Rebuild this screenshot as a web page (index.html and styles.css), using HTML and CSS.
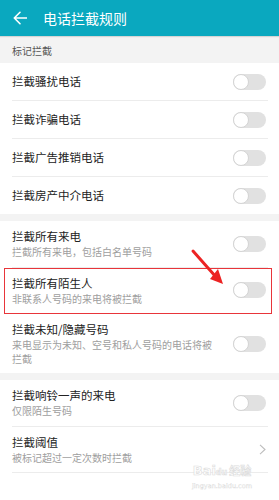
FILE: index.html
```html
<!DOCTYPE html>
<html lang="zh-CN">
<head>
<meta charset="utf-8">
<title>电话拦截规则</title>
<link rel="stylesheet" href="styles.css">
</head>
<body>
<div class="screen">
  <header class="appbar">
    <svg class="back" width="14" height="14" viewBox="0 0 14 14"><path d="M13.5 7H1.5M7 1.3L1.3 7L7 12.7" fill="none" stroke="#fff" stroke-width="1.6" stroke-linecap="round" stroke-linejoin="round"/></svg>
    <span class="title">电话拦截规则</span>
  </header>

  <div class="section-label">标记拦截</div>
  <div class="group">
    <div class="row"><div class="text"><div class="t">拦截骚扰电话</div></div><span class="toggle"></span></div>
    <div class="row"><div class="text"><div class="t">拦截诈骗电话</div></div><span class="toggle"></span></div>
    <div class="row"><div class="text"><div class="t">拦截广告推销电话</div></div><span class="toggle"></span></div>
    <div class="row last"><div class="text"><div class="t">拦截房产中介电话</div></div><span class="toggle"></span></div>
  </div>

  <div class="gap"></div>
  <div class="group">
    <div class="row two"><div class="text"><div class="t">拦截所有来电</div><div class="s">拦截所有来电，包括白名单号码</div></div><span class="toggle"></span></div>
    <div class="row two highlight"><div class="text"><div class="t">拦截所有陌生人</div><div class="s">非联系人号码的来电将被拦截</div></div><span class="toggle"></span><span class="mark"></span></div>
    <div class="row two last"><div class="text"><div class="t">拦截未知/隐藏号码</div><div class="s">来电显示为未知、空号和私人号码的电话将被拦截</div></div><span class="toggle"></span></div>
  </div>

  <div class="gap"></div>
  <div class="group">
    <div class="row two"><div class="text"><div class="t">拦截响铃一声的来电</div><div class="s">仅限陌生号码</div></div><span class="toggle"></span></div>
    <div class="row two"><div class="text"><div class="t">拦截阈值</div><div class="s">被标记超过一定次数时拦截</div></div>
      <svg class="chev" width="7" height="11" viewBox="0 0 7 11"><path d="M1 0.8L6 5.5L1 10.2" fill="none" stroke="#bdbdbd" stroke-width="1.1"/></svg>
    </div>
  </div>

  <svg class="arrow" width="40" height="42" viewBox="0 0 40 42"><path d="M3 3L26 29" stroke="#ec2323" stroke-width="3" stroke-linecap="round"/><path d="M33 36L20 31L28 21Z" fill="#ec2323"/></svg>

  <div class="watermark"><div class="wm1"><span>Bai</span><span class="du">du</span><span class="jy">经验</span></div><div class="wm2">jingyan.baidu.com</div></div>
</div>
</body>
</html>
```

FILE: styles.css
```css
html, body {
  margin: 0;
  padding: 0;
  background: #fff;
}
body {
  font-family: "Noto Sans CJK SC", "Noto Sans", sans-serif;
}
.screen {
  position: relative;
  width: 279px;
  height: 500px;
  overflow: hidden;
  background: #fff;
}
.appbar {
  height: 36px;
  background: #0aa8bf;
  display: flex;
  align-items: center;
  padding-left: 13px;
  box-shadow: 0 1px 1px rgba(0,0,0,0.12);
  position: relative;
  z-index: 1;
}
.back {
  display: block;
}
.title {
  margin-left: 16px;
  color: #fff;
  font-size: 14px;
  line-height: 16px;
}
.section-label {
  height: 27px;
  background: #f3f3f3;
  color: #555;
  font-size: 10px;
  line-height: 27px;
  padding-left: 12px;
  padding-top: 1px;
  box-sizing: border-box;
}
.gap {
  height: 7px;
  background: #f3f3f3;
}
.group {
  background: #fff;
}
.row {
  position: relative;
  display: flex;
  align-items: center;
  margin: 0 11px 0 12px;
  min-height: 37px;
  border-bottom: 1px solid #ececec;
}
.row.last {
  border-bottom: none;
}
.row.two {
  padding: 8px 0;
  min-height: 0;
}
.text {
  flex: 1;
  min-width: 0;
}
.t {
  font-size: 11.5px;
  line-height: 15px;
  color: #222;
}
.s {
  font-size: 10px;
  line-height: 13.5px;
  color: #9e9e9e;
  margin-top: 1px;
}
.toggle {
  position: relative;
  width: 33px;
  height: 16px;
  border-radius: 8px;
  background: #e1e1e1;
  margin-left: 16px;
  margin-right: 2px;
  flex: none;
}
.toggle::before {
  content: "";
  position: absolute;
  left: 0;
  top: 0;
  width: 14px;
  height: 14px;
  border-radius: 50%;
  background: #fff;
  border: 1px solid #d4d4d4;
}
.chev {
  flex: none;
  margin-right: 2px;
  margin-left: 16px;
}
.mark {
  position: absolute;
  left: -8px;
  right: -4px;
  top: 0;
  bottom: -1px;
  border: 1.5px solid #e8353a;
  pointer-events: none;
}
.arrow {
  position: absolute;
  left: 190px;
  top: 248px;
}
.watermark {
  position: absolute;
  left: 186px;
  top: 462px;
  width: 72px;
  text-align: center;
  font-family: "DejaVu Sans", sans-serif;
  color: rgba(255,255,255,0.9);
  -webkit-text-stroke: 0.6px #dcdcdc;
}
.wm1 {
  font-size: 13px;
  font-weight: bold;
  line-height: 16px;
  white-space: nowrap;
}
.wm1 .du {
  font-size: 8px;
}
.wm1 .jy {
  font-family: "Noto Sans CJK SC", sans-serif;
  font-size: 11px;
  margin-left: 2px;
}
.wm2 {
  font-size: 6.5px;
  line-height: 10px;
  font-weight: normal;
  -webkit-text-stroke: 0.3px #d6d6d6;
  white-space: nowrap;
}
```
